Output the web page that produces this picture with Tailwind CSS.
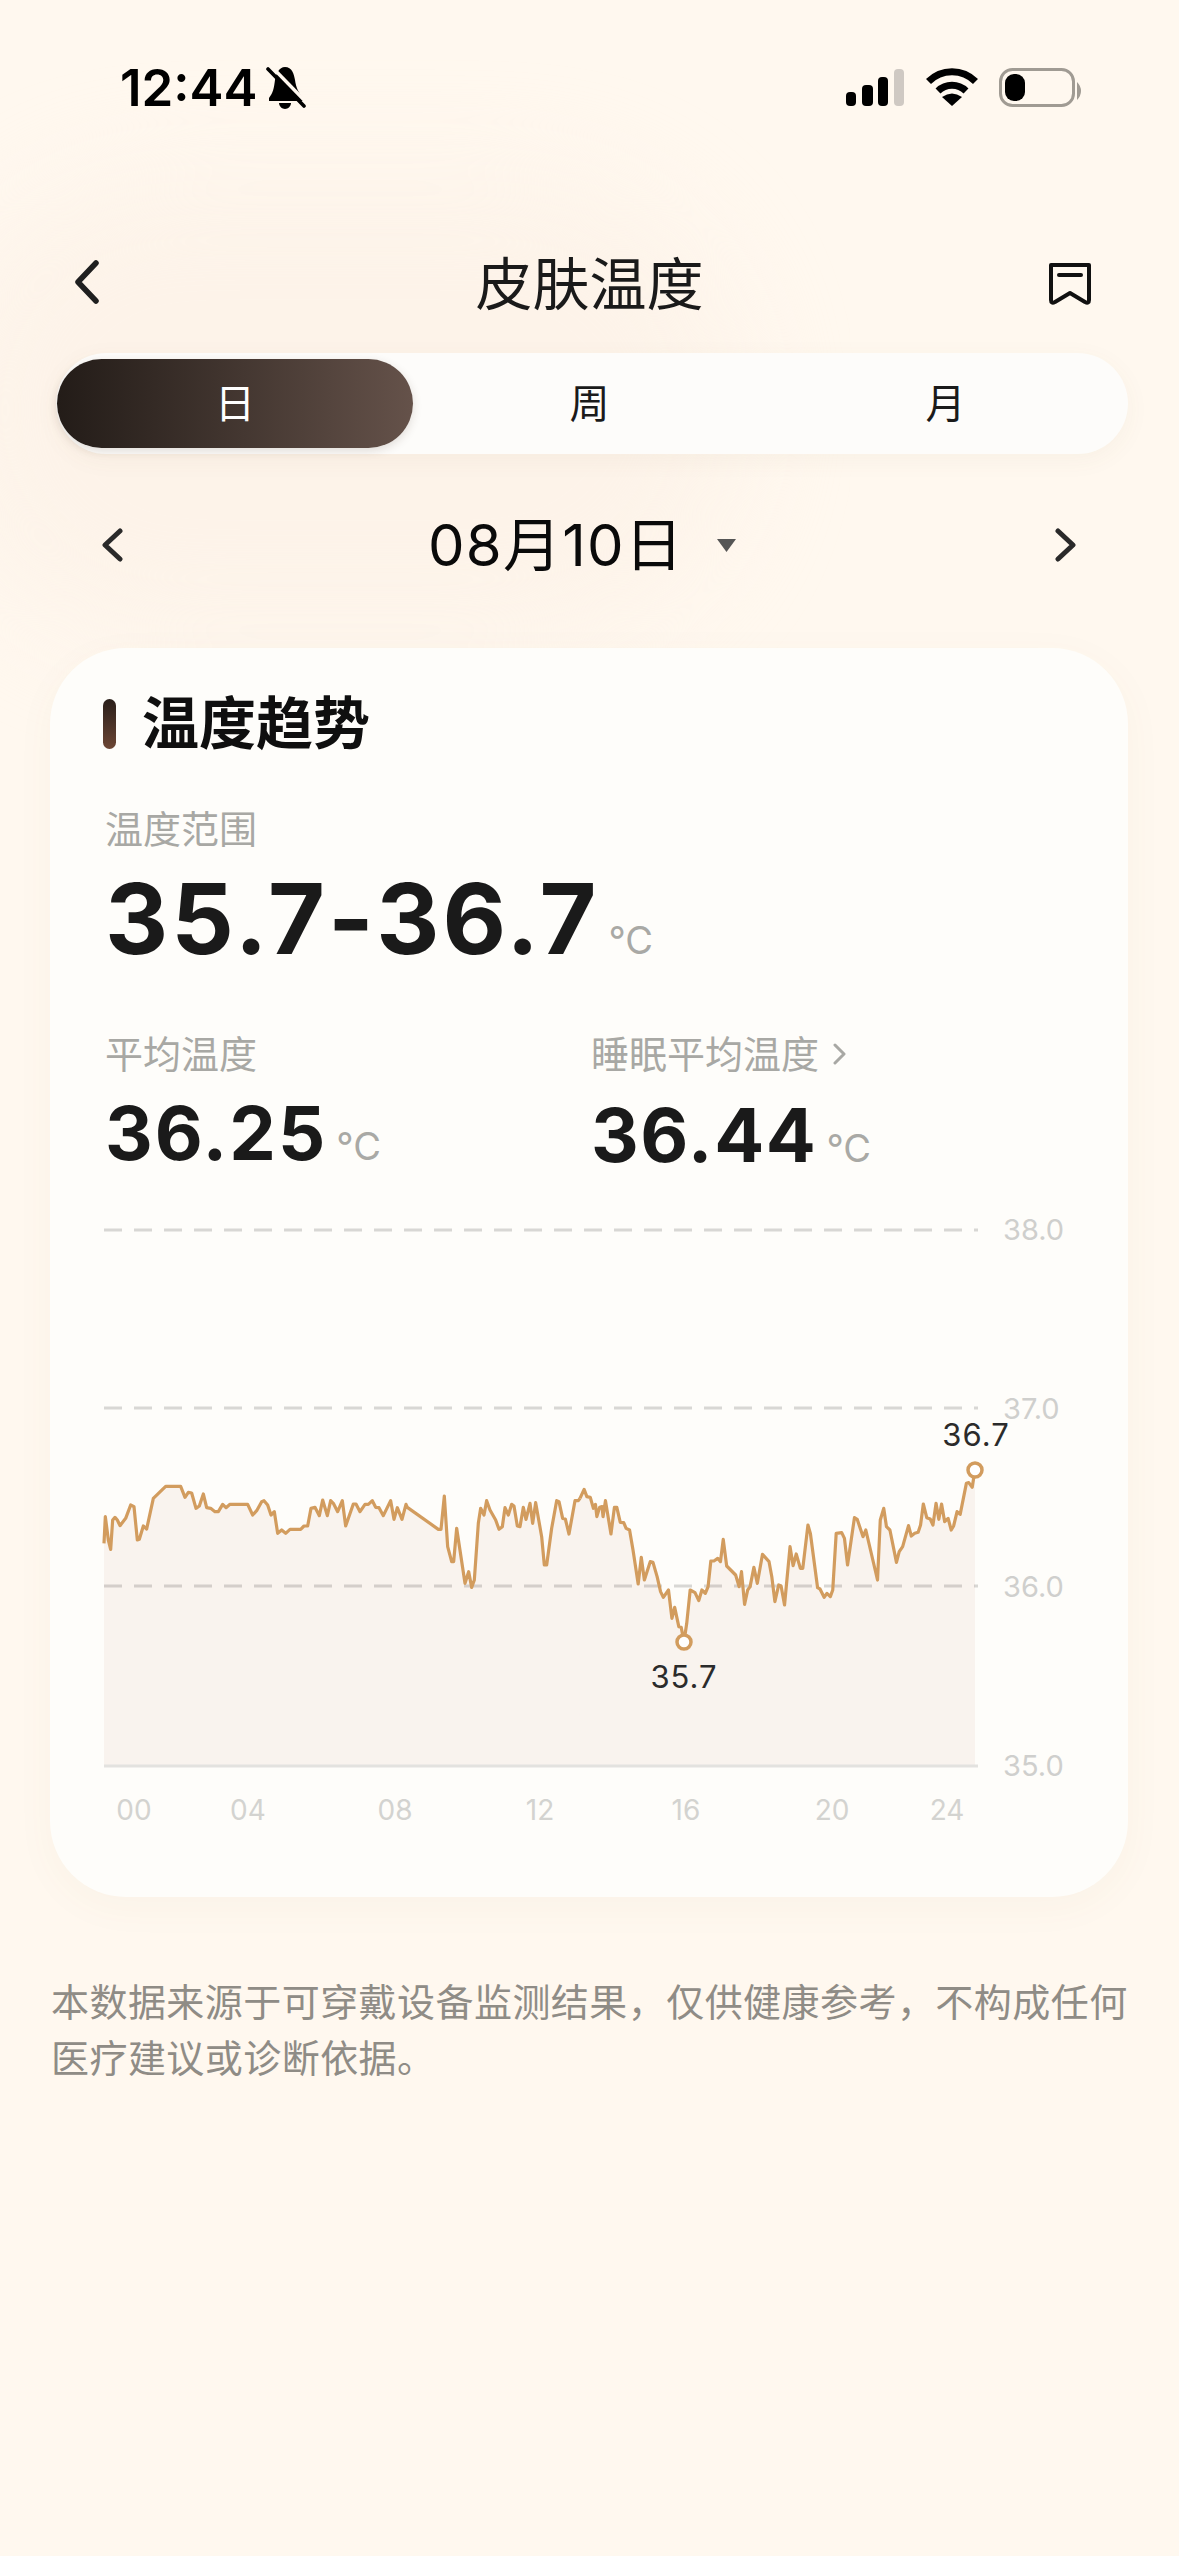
<!DOCTYPE html>
<html lang="zh">
<head>
<meta charset="utf-8">
<script src="https://cdn.jsdelivr.net/npm/@tailwindcss/browser@4"></script>
</head>
<body class="m-0">
<div class="relative w-[1179px] h-[2556px] overflow-hidden bg-[#fff8ef] font-['Inter','Noto_Sans_CJK_SC',sans-serif] text-[#1a1a1a]">
  <div class="absolute left-[-60px] top-[180px] w-[800px] h-[460px] rounded-full bg-[#fdf3e9] blur-[50px]"></div>
  <div class="relative">
    <!-- status bar -->
    <div class="mt-0 pt-[68px] pl-[120px] pr-[97px] h-[108px] flex justify-between items-center">
      <div class="flex items-center gap-[8px]">
        <span class="text-[51px] leading-[40px] font-semibold text-black">12:44</span>
        <svg class="w-[40px] h-[44px]" viewBox="0 0 40 44">
          <path d="M19 1C26 1 28 8 29 14C30 22 33 27 37 32L37 35H3L3 32C7 27 8 22 9 14C10 8 13 1 19 1Z" fill="#000"/>
          <path d="M13 37H25C25 40 22 43 19 43C16 43 13 40 13 37Z" fill="#000"/>
          <path d="M6 1L41 37" stroke="#fff8ef" stroke-width="3.4"/>
          <path d="M2 3L38 40" stroke="#000" stroke-width="3.6" stroke-linecap="round"/>
        </svg>
      </div>
      <svg class="w-[236px] h-[44px]" viewBox="846 66 236 44">
        <rect x="846" y="92" width="10" height="14" rx="4" fill="#000"/>
        <rect x="862" y="85" width="11" height="21" rx="4" fill="#000"/>
        <rect x="878" y="77" width="10" height="29" rx="4" fill="#000"/>
        <rect x="894" y="69" width="10" height="37" rx="4" fill="#cfc9c3"/>
        <path d="M928.5 81.5A33 33 0 0 1 975.5 81.5" fill="none" stroke="#000" stroke-width="7"/>
        <path d="M938 91A20 20 0 0 1 966 91" fill="none" stroke="#000" stroke-width="7"/>
        <path d="M952 106L942 97Q952 90 962 97Z" fill="#000"/>
        <rect x="1000.5" y="69.5" width="73" height="36" rx="12" fill="none" stroke="#a09b93" stroke-width="3"/>
        <rect x="1005" y="74" width="20" height="27" rx="9" fill="#000"/>
        <path d="M1077 82Q1081 86 1081 91Q1081 96 1077 100Z" fill="#a09b93"/>
      </svg>
    </div>

    <!-- header -->
    <div class="mt-[137px] h-[76px] px-[75px] grid grid-cols-[1fr_auto_1fr] items-center">
      <svg class="w-[26px] h-[44px] -mt-[4px]" viewBox="0 0 26 44"><path d="M21 3L3 22L21 41" fill="none" stroke="#1f1f1f" stroke-width="5.5" stroke-linecap="round" stroke-linejoin="round"/></svg>
      <div class="text-[57px] leading-[76px] text-center pt-[2px]">皮肤温度</div>
      <div class="flex justify-end pr-[12px]">
        <svg class="w-[44px] h-[44px] mt-[2px]" viewBox="0 0 44 44"><path d="M3 2H41V37Q41 41 37 39L22 30L7 39Q3 41 3 37Z" fill="none" stroke="#111" stroke-width="4" stroke-linejoin="round"/><path d="M11 12H33" stroke="#111" stroke-width="4" stroke-linecap="round"/></svg>
      </div>
    </div>

    <!-- segmented control -->
    <div class="mt-[32px] ml-[56px] mr-[51px] h-[101px] pl-[1px] pr-[9px] py-[6px] rounded-full bg-[#fdfcfa] shadow-[0_6px_24px_rgba(120,90,60,0.05)] grid grid-cols-[356px_1fr_1fr] text-[40px]">
      <div class="rounded-full bg-gradient-to-r from-[#231c18] to-[#65524a] text-white flex items-center justify-center shadow-[0_3px_10px_rgba(60,40,30,0.15)]">日</div>
      <div class="flex items-center justify-center">周</div>
      <div class="flex items-center justify-center pl-[6px]">月</div>
    </div>

    <!-- date row -->
    <div class="mt-[61px] h-[60px] pl-[101px] pr-[102px] flex justify-between items-center">
      <svg class="w-[22px] h-[34px]" viewBox="0 0 22 34"><path d="M19 3L4 17L19 31" fill="none" stroke="#2a2a2a" stroke-width="5" stroke-linecap="round" stroke-linejoin="round"/></svg>
      <div class="flex items-center gap-[33px] mr-[14px]">
        <span class="text-[58px] leading-[60px] tracking-[1.2px] text-[#0a0a0a]">08月10日</span>
        <svg class="w-[19px] h-[13px]" viewBox="0 0 19 13"><path d="M0 0H19L9.5 13Z" fill="#555"/></svg>
      </div>
      <svg class="w-[22px] h-[34px]" viewBox="0 0 22 34"><path d="M3 3L18 17L3 31" fill="none" stroke="#2a2a2a" stroke-width="5" stroke-linecap="round" stroke-linejoin="round"/></svg>
    </div>

    <!-- card -->
    <div class="mt-[73px] ml-[50px] mr-[51px] h-[1249px] rounded-[76px] bg-[#fefdfa] shadow-[0_10px_40px_rgba(120,90,60,0.04)] pt-[51px]">
      <div class="pl-[53px] h-[50px] flex items-center gap-[26px]">
        <div class="w-[13px] h-[50px] rounded-full bg-gradient-to-b from-[#2a1f1a] to-[#6d4634]"></div>
        <div class="text-[57px] leading-[50px] font-bold text-[#0f0f0f]">温度趋势</div>
      </div>
      <div class="pl-[55px]">
        <div class="mt-[55px] text-[38px] leading-[50px] text-[#a8a8a4]">温度范围</div>
        <div class="mt-[16px] flex items-baseline gap-[9px] h-[98px]">
          <span class="text-[98px] leading-[98px] font-bold tracking-[3px]">35.7-36.7</span>
          <span class="text-[38px] text-[#a9a9a5]">°C</span>
        </div>
        <div class="mt-[61px] grid grid-cols-[486px_1fr]">
          <div>
            <div class="text-[38px] leading-[50px] text-[#a8a8a4]">平均温度</div>
            <div class="mt-[17px] flex items-baseline gap-[9px] h-[74px]">
              <span class="text-[74px] leading-[74px] font-bold tracking-[2px]">36.25</span>
              <span class="text-[38px] text-[#a9a9a5]">°C</span>
            </div>
          </div>
          <div>
            <div class="flex items-center gap-[14px] text-[38px] leading-[50px] text-[#a8a8a4]">
              <span>睡眠平均温度</span>
              <svg class="w-[14px] h-[24px]" viewBox="0 0 14 24"><path d="M2 3L11 12L2 21" fill="none" stroke="#a8a8a4" stroke-width="3" stroke-linecap="round" stroke-linejoin="round"/></svg>
            </div>
            <div class="mt-[19px] flex items-baseline gap-[9px] h-[74px]">
              <span class="text-[74px] leading-[74px] font-bold tracking-[1.6px]">36.44</span>
              <span class="text-[38px] text-[#a9a9a5]">°C</span>
            </div>
          </div>
        </div>
      </div>
      <!-- chart: viewBox uses page coordinates -->
      <svg class="block mt-[38px] w-[1078px] h-[640px] overflow-visible" viewBox="50 1210 1078 640">
        <g transform="translate(80 1400) scale(0.33333)">
          <polygon fill="#f9f3ee" points="72,430 76,350 85,420 92,448 98,360 105,352 112,360 120,377 137,355 152,315 162,320 172,420 178,418 190,378 200,387 220,295 257,259 302,259 315,292 325,277 335,279 348,325 358,318 370,282 380,323 392,325 405,335 415,335 428,313 438,323 450,313 503,313 518,345 530,332 545,305 552,302 563,315 573,345 583,335 593,400 605,390 617,400 630,388 662,388 672,378 683,378 693,325 705,322 718,347 728,300 742,347 752,302 760,310 773,335 787,302 797,378 820,312 828,312 840,335 855,313 865,313 877,302 887,322 897,323 910,347 932,302 942,358 952,323 966,358 978,313 982,322 1075,388 1083,388 1093,288 1103,440 1115,485 1121,485 1130,385 1155,550 1166,515 1175,562 1183,540 1195,370 1202,325 1212,345 1220,302 1230,330 1247,360 1257,388 1267,380 1275,323 1285,345 1295,313 1302,318 1312,378 1320,380 1330,322 1338,358 1350,310 1358,370 1367,308 1385,410 1393,495 1400,495 1415,385 1430,302 1437,305 1448,355 1456,357 1467,402 1485,302 1495,302 1500,295 1500,1099 72,1099"/>
        </g>
        <g transform="translate(560 1400) scale(0.34438 0.33333)">
          <polygon fill="#f9f3ee" points="58,295 70,268 78,290 88,292 97,325 103,313 107,350 115,322 122,320 125,350 132,302 148,402 158,322 165,322 175,367 185,368 192,385 202,390 212,450 227,552 236,472 245,540 262,485 270,487 282,530 292,575 300,592 315,570 325,655 333,622 345,680 352,682 360,725 368,670 378,570 392,578 403,602 412,570 422,580 430,560 438,483 447,483 458,475 466,485 474,418 484,498 510,525 520,560 527,515 536,613 545,570 552,560 563,502 573,550 588,463 607,485 615,530 624,605 635,555 642,558 652,615 668,440 677,497 686,462 698,505 705,505 720,375 727,400 748,563 755,567 767,592 775,580 785,590 792,570 802,400 818,398 826,415 835,495 855,353 863,358 880,410 888,390 922,540 930,360 940,325 948,380 958,390 977,487 985,455 995,440 1012,377 1020,408 1030,400 1040,397 1047,375 1055,312 1065,353 1075,357 1083,375 1092,310 1100,358 1108,312 1117,365 1127,355 1136,390 1143,378 1153,335 1162,343 1180,250 1187,248 1197,262 1205,210 1205,1099 57,1099"/>
        </g>
        <path d="M104 1230H978M104 1408H978M104 1586H978" fill="none" stroke="#000" stroke-opacity="0.15" stroke-width="3" stroke-dasharray="18 12"/>
        <path d="M104 1766H978" stroke="#e3e2df" stroke-width="3"/>
        <g transform="translate(80 1400) scale(0.33333)">
          <polyline fill="none" stroke="#d29c5e" stroke-width="3.2" stroke-linejoin="round" vector-effect="non-scaling-stroke" points="72,430 76,350 85,420 92,448 98,360 105,352 112,360 120,377 137,355 152,315 162,320 172,420 178,418 190,378 200,387 220,295 257,259 302,259 315,292 325,277 335,279 348,325 358,318 370,282 380,323 392,325 405,335 415,335 428,313 438,323 450,313 503,313 518,345 530,332 545,305 552,302 563,315 573,345 583,335 593,400 605,390 617,400 630,388 662,388 672,378 683,378 693,325 705,322 718,347 728,300 742,347 752,302 760,310 773,335 787,302 797,378 820,312 828,312 840,335 855,313 865,313 877,302 887,322 897,323 910,347 932,302 942,358 952,323 966,358 978,313 982,322 1075,388 1083,388 1093,288 1103,440 1115,485 1121,485 1130,385 1155,550 1166,515 1175,562 1183,540 1195,370 1202,325 1212,345 1220,302 1230,330 1247,360 1257,388 1267,380 1275,323 1285,345 1295,313 1302,318 1312,378 1320,380 1330,322 1338,358 1350,310 1358,370 1367,308 1385,410 1393,495 1400,495 1415,385 1430,302 1437,305 1448,355 1456,357 1467,402 1485,302 1495,302 1500,295"/>
        </g>
        <g transform="translate(560 1400) scale(0.34438 0.33333)">
          <polyline fill="none" stroke="#d29c5e" stroke-width="3.2" stroke-linejoin="round" vector-effect="non-scaling-stroke" points="58,295 70,268 78,290 88,292 97,325 103,313 107,350 115,322 122,320 125,350 132,302 148,402 158,322 165,322 175,367 185,368 192,385 202,390 212,450 227,552 236,472 245,540 262,485 270,487 282,530 292,575 300,592 315,570 325,655 333,622 345,680 352,682 360,725 368,670 378,570 392,578 403,602 412,570 422,580 430,560 438,483 447,483 458,475 466,485 474,418 484,498 510,525 520,560 527,515 536,613 545,570 552,560 563,502 573,550 588,463 607,485 615,530 624,605 635,555 642,558 652,615 668,440 677,497 686,462 698,505 705,505 720,375 727,400 748,563 755,567 767,592 775,580 785,590 792,570 802,400 818,398 826,415 835,495 855,353 863,358 880,410 888,390 922,540 930,360 940,325 948,380 958,390 977,487 985,455 995,440 1012,377 1020,408 1030,400 1040,397 1047,375 1055,312 1065,353 1075,357 1083,375 1092,310 1100,358 1108,312 1117,365 1127,355 1136,390 1143,378 1153,335 1162,343 1180,250 1187,248 1197,262 1205,210"/>
        </g>
        <circle cx="684" cy="1642" r="7" fill="#fff" stroke="#d29c5e" stroke-width="3.5"/>
        <circle cx="975" cy="1470" r="7" fill="#fff" stroke="#d29c5e" stroke-width="3.5"/>
        <g class="text-[29px] fill-[#cfcfcd]">
          <text x="1003" y="1240">38.0</text>
          <text x="1003" y="1419">37.0</text>
          <text x="1003" y="1597">36.0</text>
          <text x="1003" y="1776">35.0</text>
        </g>
        <g class="text-[28px] fill-[#d3d3d0]" text-anchor="middle">
          <text x="134" y="1820">00</text>
          <text x="248" y="1820">04</text>
          <text x="395" y="1820">08</text>
          <text x="540" y="1820">12</text>
          <text x="686" y="1820">16</text>
          <text x="832" y="1820">20</text>
          <text x="947" y="1820">24</text>
        </g>
        <g class="text-[31px] tracking-[1px] fill-[#2b2b2b]" text-anchor="middle">
          <text x="976" y="1446">36.7</text>
          <text x="684" y="1688">35.7</text>
        </g>
      </svg>
    </div>

    <!-- footnote -->
    <p class="mt-[77px] ml-[51px] w-[1095px] text-[38px] leading-[56px] tracking-[0.45px] text-[#8f8c86]">本数据来源于可穿戴设备监测结果，仅供健康参考，不构成任何<br>医疗建议或诊断依据。</p>
  </div>
</div>
</body>
</html>
